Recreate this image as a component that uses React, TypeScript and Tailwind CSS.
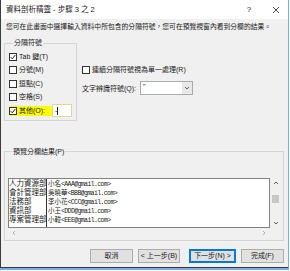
const font = "font-['Liberation_Sans','Noto_Sans_CJK_TC',sans-serif]";

function Check({ checked }: { checked?: boolean }) {
  return (
    <span className="flex h-[8px] w-[8px] shrink-0 items-center justify-center border border-[#333] bg-white">
      {checked && (
        <svg width="6" height="6" viewBox="0 0 6 6">
          <path d="M0.6 3.1 L2.3 4.8 L5.4 0.9" fill="none" stroke="#222" strokeWidth="1" />
        </svg>
      )}
    </span>
  );
}

function Chevron({ dir }: { dir: "up" | "down" | "left" | "right" }) {
  const paths: Record<string, string> = {
    up: "M1 4 L3 2 L5 4",
    down: "M1 2 L3 4 L5 2",
    left: "M4 1 L2 3 L4 5",
    right: "M2 1 L4 3 L2 5",
  };
  const color = dir === "up" || dir === "down" ? "#606060" : "#b0b0b0";
  return (
    <svg width="6" height="6" viewBox="0 0 6 6">
      <path d={paths[dir]} fill="none" stroke={color} strokeWidth="1" />
    </svg>
  );
}

const rows = [
  ["人力資源部", "小名", "<AAA@gmail.com>"],
  ["會計管理部", "吳曉華", "<BBB@gmail.com>"],
  ["法務部", "李小花", "<CCC@gmail.com>"],
  ["資訊部", "小王", "<DDD@gmail.com>"],
  ["專案管理部", "小韓", "<EEE@gmail.com>"],
];

function Button({ label, width, primary }: { label: string; width: string; primary?: boolean }) {
  return (
    <div
      className={`flex h-[14px] ${width} items-center justify-center bg-[#e1e1e1] text-[7px] leading-none ${
        primary ? "border border-[#0078d7] shadow-[inset_0_0_0_1px_#0078d7]" : "border border-[#adadad]"
      }`}
    >
      {label}
    </div>
  );
}

function App() {
  return (
    <div className={`h-[271px] w-[290px] bg-white text-[#1a1a1a] ${font}`}>
      <div className="h-[270px] w-[289px] border-r border-b-2 border-[#7aaee0]">
        <div className="flex h-full flex-col border-l border-b border-[#3c3c3c] bg-[#f0f0f0]">
          {/* title bar */}
          <div className="flex h-[19px] items-center bg-white pl-[5px] pr-[8px]">
            <span className="text-[7.5px] leading-none">資料剖析精靈 - 步驟 3 之 2</span>
            <span className="ml-auto w-[10px] text-center text-[8px] leading-none">?</span>
            <svg className="ml-[18px]" width="8" height="8" viewBox="0 0 8 8">
              <path d="M1 1 L7 7 M7 1 L1 7" stroke="#222" strokeWidth="0.8" />
            </svg>
          </div>

          <div className="mt-[4px] h-[8px] pl-[5px] text-[6.8px] leading-[8px] whitespace-nowrap">
            您可在此畫面中選擇輸入資料中所包含的分隔符號，您可在預覽視窗內看到分欄的結果。
          </div>

          <div className="ml-[3px] mt-[8px] flex">
            <fieldset className="w-[73px] border border-[#d5d5d5] pb-[2px] pl-[4px] pt-[3px]">
              <legend className="ml-[4px] px-[1px] text-[7px] leading-[8px]">分隔符號</legend>
              <div className="flex h-[13.5px] items-center gap-[2px] text-[7px]">
                <Check checked />
                <span>Tab 鍵(T)</span>
              </div>
              <div className="flex h-[13.5px] items-center gap-[2px] text-[7px]">
                <Check />
                <span>分號(M)</span>
              </div>
              <div className="flex h-[13.5px] items-center gap-[2px] text-[7px]">
                <Check />
                <span>逗點(C)</span>
              </div>
              <div className="flex h-[13.5px] items-center gap-[2px] text-[7px]">
                <Check />
                <span>空格(S)</span>
              </div>
              <div className="flex h-[13.5px] items-center text-[7px]">
                <div className="flex h-[10px] w-[43px] items-center gap-[2px] bg-[#ffff00]">
                  <Check checked />
                  <span>其他(O):</span>
                </div>
                <div className="flex h-[13px] w-[20px] items-center border border-[#d8d8a0] bg-white pl-[2px]">
                  <span className="text-[7px] leading-none">-</span>
                  <span className="h-[8px] w-px bg-[#222]" />
                </div>
              </div>
            </fieldset>

            <div className="ml-[5px] flex flex-col pt-[26px] text-[7px]">
              <div className="flex h-[9px] items-center gap-[2px]">
                <Check />
                <span className="leading-none">連續分隔符號視為單一處理(R)</span>
              </div>
              <div className="mt-[7px] flex h-[14px] items-center">
                <span className="w-[58px] leading-none">文字辨識符號(Q):</span>
                <div className="flex h-[14px] w-[53px] items-stretch border border-[#ababab] bg-white">
                  <span className="flex-1 pl-[2px] text-[7px] leading-[10px]">"</span>
                  <span className="flex w-[10px] items-center justify-center bg-[#e8e8e8]">
                    <Chevron dir="down" />
                  </span>
                </div>
              </div>
            </div>
          </div>

          <fieldset className="ml-[3px] mt-[27px] w-[280px] border border-[#d5d5d5] pb-[2px] pl-[3px] pt-[22px]">
            <legend className="ml-[4px] px-[1px] text-[7px] leading-[8px]">預覽分欄結果(P)</legend>
            <div className="flex">
              <div className="flex h-[50px] w-[262px] border border-[#828282] bg-white">
                <div className="flex w-[38px] flex-col border-r border-[#333]">
                  {rows.map((r) => (
                    <div key={r[0]} className="h-[9px] text-[7.5px] leading-[9px] whitespace-nowrap">
                      {r[0]}
                    </div>
                  ))}
                </div>
                <div className="flex flex-col pl-[1px]">
                  {rows.map((r) => (
                    <div key={r[0]} className="h-[9px] text-[6.5px] leading-[9px] whitespace-nowrap">
                      {r[1]}
                      <span className="font-['Liberation_Mono',monospace] tracking-[-0.6px]">{r[2]}</span>
                    </div>
                  ))}
                </div>
              </div>
              <div className="flex h-[50px] w-[11px] flex-col items-center">
                <div className="flex h-[10px] items-center">
                  <Chevron dir="up" />
                </div>
                <div className="mt-[7px] h-[8px] w-[7px] bg-[#c8c8c8]" />
                <div className="mt-auto flex h-[10px] items-center">
                  <Chevron dir="down" />
                </div>
              </div>
            </div>
            <div className="flex h-[10px] w-[262px] items-center justify-between px-[3px]">
              <Chevron dir="left" />
              <Chevron dir="right" />
            </div>
          </fieldset>

          <div className="ml-[89px] mt-[8px] flex">
            <Button label="取消" width="w-[43px]" />
            <div className="ml-[5px]">
              <Button label="< 上一步(B)" width="w-[42px]" />
            </div>
            <div className="ml-[9px]">
              <Button label="下一步(N) >" width="w-[47px]" primary />
            </div>
            <div className="ml-[5px]">
              <Button label="完成(F)" width="w-[43px]" />
            </div>
          </div>
        </div>
      </div>
    </div>
  );
}

export default App;
